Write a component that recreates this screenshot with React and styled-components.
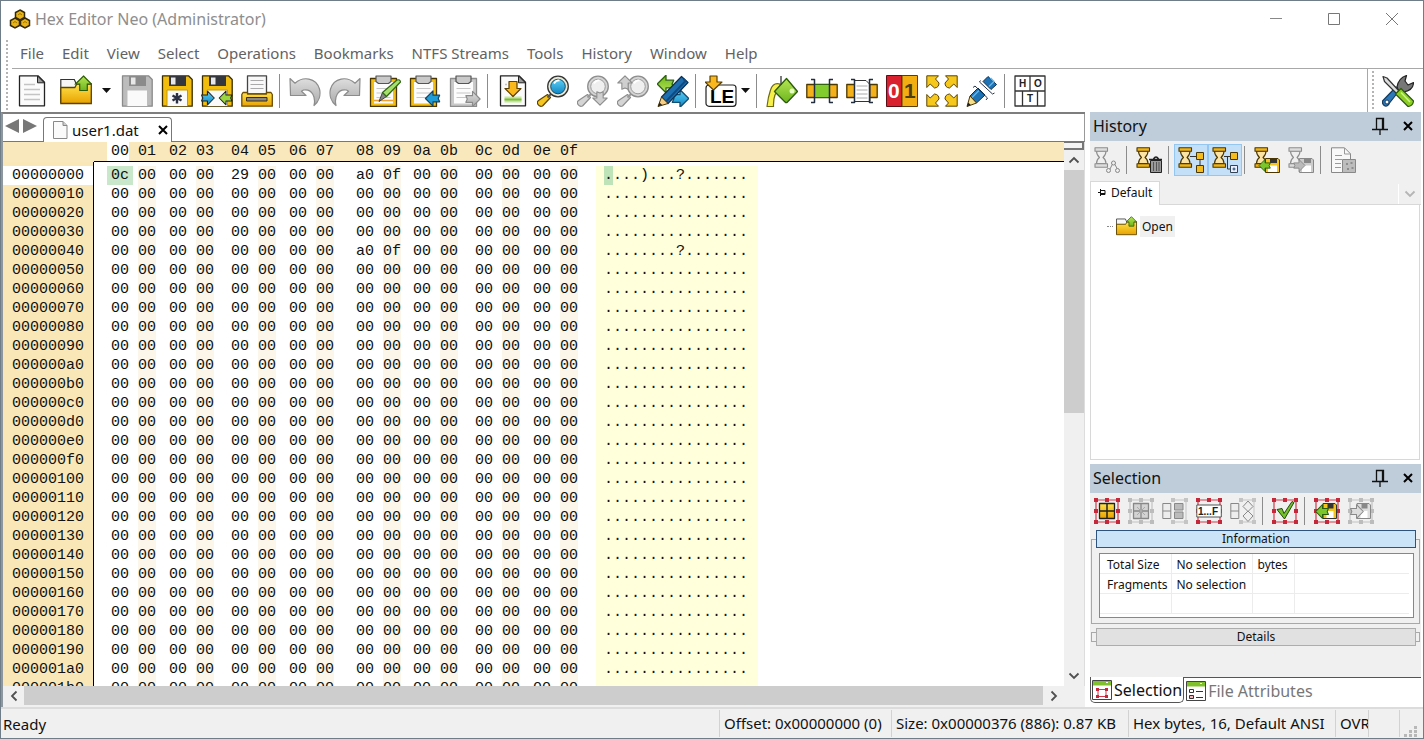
import React from 'react';
import styled, { createGlobalStyle, css } from 'styled-components';

const GlobalStyle = createGlobalStyle`
    * {
        box-sizing: border-box;
    }
    body {
        margin: 0;
        background: #fff;
        color: #111;
        font-family: "Noto Sans", "Open Sans", sans-serif;
        font-size: 15px;
    }
    button {
        margin: 0;
        padding: 0;
        border: 0;
        background: none;
        font: inherit;
        color: inherit;
    }
    svg {
        display: block;
        flex: none;
    }
`;

/* ---------- window frame ---------- */

const Window = styled.div`
    display: flex;
    flex-direction: column;
    height: 100vh;
    min-height: 480px;
    border: 1px solid #6f7d88;
    background: #fff;
    overflow: hidden;
`;

const TitleBar = styled.header`
    display: flex;
    align-items: center;
    height: 37px;
    padding: 0 2px 2px 8px;
    color: #8e8e8e;
    flex: none;

    h1 {
        flex: 1;
        margin: 0 0 0 4px;
        font-size: 16px;
        font-weight: 400;
    }
`;

const WindowButton = styled.button`
    display: flex;
    align-items: center;
    justify-content: center;
    width: 58px;
    height: 34px;
`;

const Bars = styled.div`
    display: flex;
    flex: none;
`;

const Grip = styled.div`
    width: 2px;
    margin: 2px 4px 2px ${({ $left }) => $left || 5}px;
    background: repeating-linear-gradient(#b4b4b4 0 2px, transparent 2px 4px);
`;

const BarStack = styled.div`
    flex: 1;
    min-width: 0;
`;

const MenuBar = styled.nav`
    display: flex;
    align-items: center;
    height: 31px;
    border-bottom: 1px solid #a8a8a8;

    button {
        height: 28px;
        padding: 0 9px;
        color: #626262;
        white-space: nowrap;
    }
    button:first-child {
        padding-left: 8px;
    }
`;

const ToolRow = styled.div`
    display: flex;
    align-items: center;
    height: 43px;
`;

const Tools = styled.div`
    display: flex;
    align-items: center;
    flex: 1;
`;

const ToolButton = styled.button`
    display: flex;
    align-items: center;
    justify-content: center;
    width: 40px;
    height: 40px;
    flex: none;
`;

const Split = styled.div`
    display: flex;
    margin-left: ${({ $room }) => ($room ? 4 : 0)}px;
    margin-right: ${({ $room }) => ($room ? 0 : 4)}px;
`;

const DropArrow = styled.button`
    display: flex;
    align-items: center;
    justify-content: center;
    width: ${({ $room }) => ($room ? 21 : 9)}px;
`;

const Separator = styled.span`
    width: 1px;
    height: ${({ $small }) => ($small ? 28 : 34)}px;
    margin: 0 5px 0 2px;
    background: #8c8c8c;
    flex: none;
`;

const Setup = styled.div`
    display: flex;
    align-items: center;
    align-self: stretch;
    border-left: 1px solid #a8a8a8;
    padding-right: 5px;

    > div {
        align-self: stretch;
    }
`;

const Main = styled.main`
    display: flex;
    flex: 1;
    min-height: 0;
`;

/* ---------- editor ---------- */

const Editor = styled.section`
    display: flex;
    flex-direction: column;
    flex: 1;
    min-width: 0;
    border-left: 2px solid #8d979d;
    border-top: 2px solid #7e7e7e;
`;

const TabStrip = styled.div`
    display: flex;
    height: 28px;
    flex: none;
    border-bottom: 1px solid #777;
    border-right: 1px solid #999;
`;

const TabNav = styled.button`
    display: flex;
    align-items: center;
    height: 24px;
    width: 18px;
    justify-content: center;
`;

const FileTab = styled.div`
    display: flex;
    align-items: center;
    height: 25px;
    margin: 3px 0 0 4px;
    padding: 0 3px 1px 9px;
    border: 1px solid #777;
    border-bottom: 0;
    border-radius: 4px 4px 0 0;
    background: #fff;

    span {
        margin: 0 19px 0 4px;
    }
`;

const Work = styled.div`
    display: flex;
    flex: 1;
    min-height: 0;
`;

const HexView = styled.div`
    flex: 1;
    min-width: 0;
    overflow: hidden;
`;

const HexTable = styled.table`
    width: 100%;
    table-layout: fixed;
    border-collapse: separate;
    border-spacing: 0;
    font: 15px/19px "Liberation Mono", monospace;
    color: #111;

    th,
    td {
        height: 19px;
        padding: 0;
        font-weight: 400;
        text-align: left;
        white-space: pre;
    }

    thead th {
        background: #fae8bd;
        border-bottom: 1px solid #000;
    }

    thead th:first-child {
        border-bottom: 0;
    }

    tbody tr:first-child > * {
        height: 4px;
    }
`;

const Offset = styled.th`
    && {
        padding-left: 9px;
        border-right: 1px solid #000;
        background: ${({ $active }) => ($active ? '#fff' : '#fae7b8')};
    }
`;

const Byte = styled.span`
    display: block;
    width: 18px;
    height: 19px;
    margin-left: auto;
    background: ${({ $odd }) => ($odd ? '#fcf5ea' : 'transparent')};
    ${({ $mark }) => $mark && css`
        background: ${$mark};
        box-shadow: -4px 0 0 ${$mark}, 4px 0 0 ${$mark};
    `}
`;

const Ascii = styled.td`
    background: #ffffdb;
    span {
        display: block;
        padding-left: 8px;
    }
    mark {
        display: inline-block;
        background: #bfe3b8;
        color: inherit;
    }
`;

const VScroll = styled.div`
    display: flex;
    flex-direction: column;
    width: 21px;
    flex: none;
    background: #f0f0f0;
    border-right: 1px solid #ddd;

    button {
        display: flex;
        align-items: center;
        justify-content: center;
        height: 20px;
    }
`;

const SplitBox = styled.div`
    height: 8px;
    border: 2px solid #777;
    border-left: 0;
    border-top-width: 1px;
    background: #f4f4f4;
`;

const VTrack = styled.div`
    flex: 1;
    div {
        height: 49%;
        background: #cdcdcd;
    }
`;

const HScroll = styled.div`
    display: flex;
    align-items: flex-start;
    height: 21px;
    padding-right: 21px;
    flex: none;
    background: #f0f0f0;

    button {
        display: flex;
        align-items: center;
        justify-content: center;
        width: 21px;
        height: 20px;
    }

    div {
        flex: 1;
        height: 19px;
        background: #cdcdcd;
    }
`;

/* ---------- side panels ---------- */

const Side = styled.aside`
    display: flex;
    flex-direction: column;
    width: 337px;
    flex: none;
    margin-left: 1px;
    padding: 0 2px 0 4px;
`;

const PanelTitle = styled.div`
    display: flex;
    align-items: center;
    height: 29px;
    padding: 0 8px 1px 3px;
    flex: none;
    background: #bfcddb;

    h2 {
        flex: 1;
        margin: 0;
        font-size: 16px;
        font-weight: 400;
    }
    button {
        display: flex;
        margin-left: 15px;
    }
`;

const PanelTools = styled.div`
    display: flex;
    align-items: center;
    height: 37px;
    flex: none;
    background: #f0f0f0;
`;

const SmallTool = styled.button`
    display: flex;
    align-items: center;
    justify-content: center;
    width: 34px;
    height: 32px;
    ${({ $on }) => $on && css`
        background: #c4dff8;
        border: 1px solid #93c6f2;
    `}
`;

const HistoryTabs = styled.div`
    display: flex;
    align-items: flex-end;
    justify-content: space-between;
    height: 27px;
    flex: none;
    background: #f0f0f0;
    box-shadow: inset 0 -1px 0 #d8d8d8;
    font-size: 12px;

    > button:first-child {
        display: flex;
        align-items: center;
        gap: 5px;
        height: 24px;
        padding: 0 7px 2px;
        border: 1px solid #d8d8d8;
        border-bottom: 0;
        background: #fff;
    }
    > button:last-child {
        display: flex;
        align-items: center;
        justify-content: center;
        width: 23px;
        height: 20px;
        margin-bottom: 1px;
        border-left: 1px solid #fff;
    }
`;

const Tree = styled.ul`
    flex: 1;
    margin: 0 1px 0 0;
    padding: 10px 0 0 16px;
    border: 1px solid #d8d8d8;
    border-top: 0;
    list-style: none;
    font-size: 12px;

    li {
        display: flex;
        align-items: center;
        height: 22px;
    }
    span {
        padding: 0 2px;
        margin-left: 3px;
        line-height: 21px;
        background: #f0f0f0;
    }
`;

const Dots = styled.i`
    width: 6px;
    margin-right: 3px;
    border-top: 1px dotted #888;
`;

const SelectionPanel = styled.section`
    margin-top: 4px;
    flex: none;
    background: #f0f0f0;
`;

const Group = styled.div`
    margin: ${({ $closed }) => ($closed ? '8px 1px 35px' : '9px 1px 0')};
    border: 1px solid #a8a8a8;
    padding-bottom: ${({ $closed }) => ($closed ? 0 : 5)}px;
`;

const GroupButton = styled.button`
    display: block;
    width: calc(100% - 7px);
    height: 18px;
    margin: ${({ $open }) => ($open ? '-10px 3px 5px 4px' : '-5px 3px -5px 4px')};
    border: 1px solid ${({ $open }) => ($open ? '#2b5580' : '#adadad')};
    background: ${({ $open }) => ($open ? '#cce4f7' : '#e1e1e1')};
    font-size: 12px;
    line-height: 16px;
`;

const InfoBox = styled.div`
    margin: 0 5px 0 7px;
    padding-bottom: 3px;
    border: 1px solid #828790;
    background: #fff;
`;

const InfoTable = styled.table`
    width: calc(100% - 4px);
    table-layout: fixed;
    border-collapse: collapse;
    font-size: 12px;
    line-height: 16px;

    td,
    th {
        height: 20px;
        padding: 3px 0 0 5px;
        border-right: 1px solid #ececec;
        border-bottom: 1px solid #ececec;
        font-weight: 400;
        text-align: left;
        white-space: nowrap;
    }
    th {
        padding-left: 7px;
    }
    td:last-child {
        border-right: 0;
    }
`;

const DockTabs = styled.div`
    display: flex;
    height: 30px;
    background: #fff;
    padding-bottom: 4px;

    &::after {
        content: "";
        flex: 1;
        border-top: 1px solid #555;
    }
`;

const DockTab = styled.button`
    display: flex;
    align-items: center;
    gap: 2px;
    padding: 0 2px;
    font-size: 16px;
    white-space: nowrap;
    color: #777;
    border-top: 1px solid #555;
    ${({ $active }) => $active && css`
        padding: 0 1px;
        color: #111;
        border: 1px solid #555;
        border-top: 0;
        border-radius: 0 0 5px 5px;
    `}
`;

const StatusBar = styled.footer`
    display: flex;
    align-items: center;
    height: 31px;
    flex: none;
    padding-left: 2px;
    border-top: 2px solid #dcdcdc;
    background: #f0f0f0;
    white-space: nowrap;
`;

const Pane = styled.span`
    width: ${({ $w }) => $w}px;
    height: 27px;
    line-height: 26px;
    padding-left: 4px;
    border-left: 1px solid #d2d2d2;
    overflow: hidden;
    flex: none;
`;

/* ---------- icons ---------- */

const Gradients = () => (
    <svg width="0" height="0" aria-hidden="true">
        <defs>
            <linearGradient id="gold" x2="0" y2="1">
                <stop offset="0" stopColor="#ffe24a" />
                <stop offset="1" stopColor="#e8a200" />
            </linearGradient>
            <linearGradient id="green" x2="0" y2="1">
                <stop offset="0" stopColor="#b5e655" />
                <stop offset="1" stopColor="#6db51c" />
            </linearGradient>
            <linearGradient id="blue" x2="0" y2="1">
                <stop offset="0" stopColor="#5fd0f5" />
                <stop offset="1" stopColor="#0d86c4" />
            </linearGradient>
            <linearGradient id="gray" x2="0" y2="1">
                <stop offset="0" stopColor="#dedede" />
                <stop offset="1" stopColor="#a9a9a9" />
            </linearGradient>
        </defs>
    </svg>
);

const Icon = ({ size = 32, children }) => (
    <svg width={size} height={size} viewBox={`0 0 ${size} ${size}`} fill="none" strokeLinejoin="round" aria-hidden="true">
        {children}
    </svg>
);

// block arrow pointing right, centred on its own origin
const Arrow = ({ x, y, turn = 0, scale = 1, fill, stroke = '#222' }) => (
    <path
        transform={`translate(${x} ${y}) rotate(${turn}) scale(${scale})`}
        d="M-7-3.5H0V-8L8 0 0 8V3.500H-7L-5.500 0z"
        fill={fill}
        stroke={stroke}
        strokeWidth="1.2"
    />
);

const Page = ({ lines = 'M8 9.500h11M8 14.500h16M8 19.500h16M8 24.500h16' }) => (
    <>
        <path d="M3.500.8H22l6.500 6.500v23.500h-25z" fill="#fbfbfb" stroke="#222" strokeWidth="1.300" />
        <path d="M21.500 1v6.800h6.800z" fill="#999" stroke="#222" />
        <path d={lines} stroke="#c4c4c4" strokeWidth="1.300" />
    </>
);

const NewIcon = () => <Icon><Page /></Icon>;

const Folder = () => (
    <>
        <path d="M.8 28V4.500h13.500l2 4.500H24v4H.8" fill="#f6f6f6" stroke="#333" strokeWidth="1.200" />
        <path d="M.8 28.500V12.500h14l2-3.500h14.500v19.500z" fill="url(#gold)" stroke="#5c4300" strokeWidth="1.300" />
        <path d="M23.500 1L31.500 9h-4.200v6.500h-7.600V9h-4.200z" fill="url(#green)" stroke="#2d5b0c" strokeWidth="1.200" />
    </>
);

const OpenIcon = ({ size = 32 }) => (
    <svg width={size} height={size} viewBox="0 0 32 32" fill="none" aria-hidden="true"><Folder /></svg>
);

const Floppy = ({ off }) => (
    <>
        <path d="M1.500.8h26l3.700 3.700v26.700H1.500z" fill={off ? '#bcbcbc' : '#f2bd0d'} stroke={off ? '#8a8a8a' : '#3a2c00'} strokeWidth="1.300" />
        <path d="M8 1h17v10H8z" fill={off ? '#8b8b8b' : '#34373d'} />
        <path d="M10 2.500h4.500v7H10z" fill="#e8e8e8" />
        <path d="M6 15h20.500v16H6z" fill="#fafafa" />
        <path d="M6 31V15h20.500v16" stroke={off ? '#bdbdbd' : '#c89a06'} />
    </>
);

const SaveIcon = () => <Icon><Floppy off /></Icon>;

const SaveAsIcon = () => (
    <Icon>
        <Floppy />
        <path d="M16 18v10.500M11.500 20.500l9 5M20.500 20.500l-9 5" stroke="#2b3042" strokeWidth="2.400" />
    </Icon>
);

const SaveSelIcon = () => (
    <Icon>
        <Floppy />
        <Arrow x={6.5} y={23} scale={0.85} fill="url(#blue)" />
        <Arrow x={25} y={23} turn={180} scale={0.85} fill="#9ad43f" />
    </Icon>
);

const PrintIcon = () => (
    <Icon>
        <path d="M6.500.8h19V19h-19z" fill="#f8f8f8" stroke="#444" strokeWidth="1.300" />
        <path d="M9.500 5.500h13M9.500 9.500h13M9.500 13.500h13" stroke="#aaa" />
        <path d="M2 17.500h4.500V19h19v-1.500H30l1.300 2v11.700H.8V19.500z" fill="url(#gold)" stroke="#6c4c00" strokeWidth="1.300" />
        <path d="M5.500 22.500h20.500v3.500H5.500z" fill="#888" stroke="#3b2b00" />
    </Icon>
);

const Curl = () => (
    <path d="M1 3.500l5 4.700C14 1 27 2.500 30.500 14c1.500 6-.5 12.500-5.500 16.500C27 22 23 13.500 14.500 15l-2 1.200 4.500 4.300H1.500z" fill="url(#gray)" stroke="#8c8c8c" strokeWidth="1.200" />
);

const UndoIcon = () => <Icon><Curl /></Icon>;
const RedoIcon = () => <Icon><g transform="matrix(-1 0 0 1 32 0)"><Curl /></g></Icon>;

const Clipboard = ({ off }) => (
    <>
        <path d="M1.500 3.500h26v28h-26z" fill={off ? '#c9c9c9' : '#f3bd12'} stroke={off ? '#8d8d8d' : '#4a3600'} strokeWidth="1.300" />
        <path d="M5 7h19v21.500H5z" fill="#fcfcfc" />
        <path d="M7.500 13.500h14M7.500 18h14M7.500 22.500h14" stroke="#c6c6c6" />
        <path d="M7 1h15v5.500l-2.500 2h-10L7 6.500z" fill="#c9c9c9" stroke="#555" strokeWidth="1.200" />
    </>
);

const ClipEditIcon = () => (
    <Icon>
        <Clipboard />
        <path d="M5 25.500h19" stroke="#f0a030" strokeWidth="1.500" />
        <path d="M10 26.500l3.500-9 4 4z" fill="#888" stroke="#444" />
        <path d="M13.500 17.500L28 5q3-1 3.500 2L17.500 21.500z" fill="#a6df6c" stroke="#33651a" strokeWidth="1.200" />
    </Icon>
);

const PasteIcon = () => <Icon><Clipboard /><Arrow x={24} y={23.5} turn={180} scale={0.95} fill="#1f9bd6" stroke="#14405c" /></Icon>;
const CopyIcon = () => <Icon><Clipboard off /><Arrow x={23.5} y={24} scale={0.95} fill="url(#gray)" stroke="#8a8a8a" /></Icon>;

const GotoIcon = () => (
    <Icon>
        <Page lines="M8 9.500h2" />
        <path d="M7.500 21.500h17v6h-17z" fill="#c6e69a" />
        <path d="M7.500 24.500h17" stroke="#7cbd3e" strokeWidth="2" />
        <path d="M12 6.500h8v7h4L16 21.500l-8-8h4z" fill="#fbb81c" stroke="#5b4000" strokeWidth="1.200" />
    </Icon>
);

const Lens = ({ off }) => (
    <>
        <path d="M10.500 19.500l3 3-8 8.500q-3 1-4.500-1.500t.5-4z" fill={off ? '#d5d5d5' : '#f5c520'} stroke={off ? '#8d8d8d' : '#5a4300'} strokeWidth="1.200" />
        <path d="M10.500 22.500l4-4" stroke={off ? '#999' : '#555'} strokeWidth="2" />
        <circle cx="21" cy="11.500" r="10.300" fill={off ? '#d4d4d4' : '#e9e9d7'} stroke={off ? '#8d8d8d' : '#333'} strokeWidth="1.300" />
        <circle cx="21" cy="11.500" r="7.300" fill={off ? '#efefef' : 'url(#blue)'} stroke={off ? '#9c9c9c' : '#1b4a66'} />
        <path d="M17 8.500q2-3.500 5.500-3" stroke="#fff" strokeWidth="1.800" />
    </>
);

const FindIcon = () => <Icon><Lens /></Icon>;
const FindNextIcon = () => <Icon><Lens off /><Arrow x={23} y={23} turn={90} scale={0.9} fill="#cfcfcf" stroke="#8d8d8d" /></Icon>;
const FindPrevIcon = () => <Icon><Lens off /><Arrow x={8} y={8} turn={-90} scale={0.9} fill="#cfcfcf" stroke="#8d8d8d" /></Icon>;

const ReplaceIcon = () => (
    <Icon>
        <Arrow x={9} y={9} turn={180} scale={1.1} fill="url(#green)" stroke="#2f6313" />
        <Arrow x={23} y={23.5} scale={1.1} fill="url(#blue)" stroke="#114e73" />
        <path d="M24.500 1.500l6.500 6-20 21-6.500-6.500z" fill="#1d6fb0" stroke="#0c2f50" strokeWidth="1.200" />
        <path d="M26.500 4l2 2L9 26.500" stroke="#114a80" strokeWidth="2" />
        <path d="M1 31.500l3.500-9.500 6.500 6.500z" fill="#f5cf87" stroke="#4a3300" />
        <path d="M1 31.500l1.500-4 2.700 2.500z" fill="#222" />
    </Icon>
);

const EndianIcon = () => (
    <Icon>
        <rect x="1" y="10" width="30" height="21.300" rx="3" fill="#fff" stroke="#222" strokeWidth="1.200" />
        <text x="5" y="28" fill="#000" fontFamily="Liberation Sans" fontWeight="700" fontSize="19">LE</text>
        <path d="M5 1h7v6h5l-8.500 8L0 7h5z" fill="#fbb81c" stroke="#5b4000" strokeWidth="1.200" />
    </Icon>
);

const FillIcon = () => (
    <Icon>
        <path d="M14 9q-7-2-9.500 6Q2 22 1 31.500h6.500Q7 18 14 14z" fill="#f7f04a" stroke="#6d6a10" strokeWidth="1.200" />
        <path d="M20.500 3.500L31.500 16.500 21 27.500q-1 .5-2-.5L8.500 16.500z" fill="url(#green)" stroke="#2b5b0c" strokeWidth="1.300" />
        <path d="M15 1v8.500" stroke="#333" strokeWidth="1.300" />
        <circle cx="26" cy="16" r="2.500" fill="#e6ffc2" />
    </Icon>
);

const Brackets = () => (
    <path d="M5 4.500h3.500v23H5M27 4.500h-3.500v23H27" stroke="#222d40" strokeWidth="1.500" />
);

const AllocIcon = () => (
    <Icon>
        <path d="M.8 9.500h30.400v13H.8z" fill="#f4b11a" stroke="#4d3800" strokeWidth="1.300" />
        <path d="M8.500 9.500h15v13h-15z" fill="#83cc2e" stroke="#31640d" />
        <Brackets />
    </Icon>
);

const InsertFileIcon = () => (
    <Icon>
        <path d="M.8 9.500h30.400v13H.8z" fill="#f4b11a" stroke="#4d3800" strokeWidth="1.300" />
        <path d="M8.500 5.500H20l4 4v17H8.500z" fill="#fff" stroke="#333" />
        <path d="M10.500 11h11M10.500 15h11M10.500 19h11M10.500 23h11" stroke="#aaa" />
        <Brackets />
    </Icon>
);

const BitsIcon = () => (
    <Icon>
        <path d="M.5.500H16v31H.5z" fill="#d9202e" stroke="#5a0d12" />
        <path d="M16 .5h15.500v31H16z" fill="#f3ae12" stroke="#5b3f00" />
        <text x="2" y="23" fill="#fff" fontFamily="Liberation Sans" fontWeight="700" fontSize="21">0</text>
        <text x="18" y="23" fill="#4c4010" fontFamily="Liberation Sans" fontWeight="700" fontSize="21">1</text>
    </Icon>
);

const Corner = ({ flip }) => (
    <path transform={flip} d="M.8.8h11.700l-3 3.200L13 8q0 4.500-4.500 5l-4.300-4-3.400 3.500z" fill="#f6c81c" stroke="#5b4300" />
);

const ExpandIcon = () => (
    <Icon>
        <Corner />
        <Corner flip="matrix(-1 0 0 1 32 0)" />
        <Corner flip="matrix(1 0 0 -1 0 32)" />
        <Corner flip="matrix(-1 0 0 -1 32 32)" />
    </Icon>
);

const ModifyIcon = () => (
    <Icon>
        <path d="M22 1.500l8.500 8-5.500 5-8-8z" fill="#1e73b6" stroke="#0c2f50" />
        <path d="M24.500 3l3.500 3.500-5 5" stroke="#66b6e8" strokeWidth="1.500" />
        <path d="M12 13l7 7-8.500 8L4 21z" fill="#1e73b6" stroke="#0c2f50" />
        <path d="M13 15.500L6 22.500" stroke="#66b6e8" strokeWidth="1.500" />
        <path d="M1 31.500L4 21l6.500 7z" fill="#f6e08c" stroke="#4a3300" />
        <path d="M1 31.500l1.300-4 2.500 2.500z" fill="#222" />
        <path d="M7 12.500l2-1.500 12.500 12-1.500 2M14.500 5.500l-1 1.500 13 12 2-1" stroke="#26344a" />
    </Icon>
);

const LayoutIcon = () => (
    <Icon>
        <path d="M1 1h30v30H1zM1 16h30M16 1v15M8.500 16v15M23.500 16v15" fill="#fff" stroke="#333" strokeWidth="1.300" />
        <g fill="#222" fontFamily="Liberation Sans" fontWeight="700" fontSize="10">
            <text x="5" y="12">H</text>
            <text x="20" y="12">O</text>
            <text x="13" y="27">T</text>
        </g>
    </Icon>
);

const SetupIcon = () => (
    <Icon>
        <path d="M18.500 14L7.500 28q-1.500 3.500-4.500 3-3-1.500-2.500-5l13.500-14z" fill="#2c78b8" stroke="#163a5c" strokeWidth="1.200" />
        <circle cx="5" cy="27" r="2" fill="#fff" stroke="#163a5c" />
        <path d="M15 12q1.500-9 9.500-11.500L23 6l3 4 5.500-2.500q0 8-10 9.500L18 19z" fill="#777" stroke="#222" strokeWidth="1.200" />
        <path d="M1 1.500l4 1.500 12 13-2.500 2.500L2.500 6.500z" fill="#ddd" stroke="#333" strokeWidth="1.200" />
        <path d="M13.500 19l5.500-5.500 12.500 12.500q-.5 5-5.500 5.500z" fill="#8ccf22" stroke="#2d5b0c" strokeWidth="1.200" />
        <path d="M19 17.500l9 9.500" stroke="#cdf58a" strokeWidth="1.500" />
    </Icon>
);

const AppIcon = () => (
    <svg width="22" height="20" viewBox="0 0 22 20" fill="#e9b417" stroke="#33290a" strokeWidth="1.500" aria-hidden="true">
        <path d="M11 1l4.500 2.500v5L11 11 6.500 8.500v-5z" />
        <path d="M6 9l4.500 2.500v5L6 19l-4.500-2.500v-5z" />
        <path d="M16 9l4.500 2.500v5L16 19l-4.500-2.500v-5z" />
        <path d="M9 6l2-1.500L13 6M4 14l2-1.500L8 14M14 14l2-1.500 2 1.500" stroke="#a07500" strokeWidth="1" />
    </svg>
);

const Caret = () => <svg width="9" height="5" aria-hidden="true"><path d="M0 0h9L4.500 5z" fill="#111" /></svg>;

const Chevron = ({ turn = 0, color = '#505050' }) => (
    <svg width="12" height="12" viewBox="0 0 12 12" aria-hidden="true">
        <path transform={`rotate(${turn} 6 6)`} d="M1.500 3.500L6 8l4.500-4.500" fill="none" stroke={color} strokeWidth="1.800" />
    </svg>
);

const Cross = ({ size = 10 }) => (
    <svg width={size} height={size} viewBox="0 0 10 10" aria-hidden="true">
        <path d="M1 1l8 8M9 1L1 9" stroke="#000" strokeWidth="2" />
    </svg>
);

const PinIcon = () => (
    <svg width="16" height="18" viewBox="0 0 16 18" fill="none" stroke="#111" aria-hidden="true">
        <path d="M4.500 12V1.500h7V12M10.500 2v10M0 12.500h16M8 12.500V18" strokeWidth="1.300" />
    </svg>
);

const TinyPin = () => (
    <svg width="8" height="8" viewBox="0 0 8 8" fill="none" stroke="#111" aria-hidden="true">
        <path d="M0 3.500h2.500M2.500 0v7M3 1.500h4v4H3M3 4.500h4" />
    </svg>
);

const BlankFile = () => (
    <svg width="15" height="18" viewBox="0 0 15 18" fill="#fafafa" stroke="#888" aria-hidden="true">
        <path d="M.5.500h9.500l4 4v13H.5z" />
        <path d="M10 .5v4h4" fill="#ccc" />
    </svg>
);

const Hourglass = ({ off }) => (
    <g stroke={off ? '#8d8d8d' : '#4a3600'} strokeWidth="1.100">
        <path d="M2.500 4q0 4 3 6.500-3 2-3 6H12q0-4-3-6 3-2.500 3-6.500z" fill={off ? '#efefef' : '#fbe3a6'} />
        <path d="M1 .8h12.500v3.400H1zM1 16.800h12.500v3.400H1z" fill={off ? '#ddd' : '#f0b41a'} />
    </g>
);

const HistoryTreeIcon = () => (
    <Icon size={26}>
        <Hourglass off />
        <path d="M19 16l-4 8M20 16l4 7" stroke="#888" />
        <g fill="#eee" stroke="#888">
            <circle cx="19.500" cy="16" r="2" /><circle cx="14.500" cy="23.500" r="2" /><circle cx="23.500" cy="23.500" r="2" />
        </g>
    </Icon>
);

const PurgeIcon = () => (
    <Icon size={26}>
        <Hourglass />
        <path d="M14.500 13.500h11V25.500h-11z" fill="#9a9a9a" stroke="#222" />
        <path d="M13 12.500h13.500M17.500 12q2.500-4 5 0" stroke="#222" strokeWidth="1.500" />
        <path d="M17.500 15v9M20.500 15v9M23 15v9" stroke="#555" />
    </Icon>
);

const BranchIcon = ({ plus }) => (
    <Icon size={26}>
        <Hourglass />
        <path d={plus ? 'M12 9.500h6M15.500 9.500V22H19' : 'M12 9.500h7M22 12v8'} stroke="#333" />
        <path d="M18.500 5.500h7v7h-7z" fill="#f4bd1d" stroke="#4a3600" />
        <path d="M18.500 18.500h7v7h-7z" fill={plus ? '#eef' : '#f4bd1d'} stroke={plus ? '#345' : '#4a3600'} />
        {plus && <path d="M22 20.500v3M20.500 22h3" stroke="#146" />}
    </Icon>
);

const HistorySaveIcon = ({ off }) => (
    <Icon size={26}>
        <Hourglass off={off} />
        <path d="M11.500 11.500H24l1.500 1.500v12.500h-14z" fill={off ? '#ccc' : '#f5c31c'} stroke={off ? '#888' : '#4a3600'} />
        <path d="M16 12h7v4h-7z" fill={off ? '#888' : '#333'} />
        <path d="M14 18.500h9v6.500h-9z" fill="#fff" />
        <Arrow x={11} y={18.500} turn={off ? 0 : 180} scale={0.75} fill={off ? '#bbb' : '#7cc62c'} stroke={off ? '#888' : '#285b0c'} />
    </Icon>
);

const HistoryPageIcon = () => (
    <Icon size={26}>
        <path d="M1.500.8h13l6 6v18.700h-19z" fill="#f8f8f8" stroke="#888" />
        <path d="M14.500 1v6h6M5 8.500h7M5 12.500h7M5 16.500h6M5 20.500h6" stroke="#999" />
        <path d="M12.500 12.500h13v13h-13z" fill="#bdbdbd" stroke="#888" />
        <path d="M16 16h2v2h-2zM20.500 15h2v2h-2zM17 21h2v2h-2zM21.500 20h2v2h-2z" fill="#8d8d8d" />
    </Icon>
);

const Frame = ({ off }) => {
    const spots = [[0, 0], [11, 0], [22, 0], [0, 11], [22, 11], [0, 22], [11, 22], [22, 22]];
    return (
        <g>
            <path d="M2 2h22v22H2z" stroke={off ? '#c2c2c2' : '#d3394a'} strokeWidth="1.200" />
            {spots.map(([x, y]) => (
                <rect key={`${x}-${y}`} x={x} y={y} width="4" height="4" fill={off ? '#bcbcbc' : '#c4283a'} />
            ))}
        </g>
    );
};

const SelAllIcon = () => (
    <Icon size={26}>
        <Frame />
        <path d="M5.500 5.500h15v15h-15z" fill="url(#gold)" stroke="#222" strokeWidth="1.300" />
        <path d="M13 5.500v15M5.500 13h15" stroke="#222" strokeWidth="1.500" />
    </Icon>
);

const SelNoneIcon = () => (
    <Icon size={26}>
        <Frame off />
        <path d="M5.500 5.500h15v15h-15zM13 5.500v15M5.500 13h15" fill="#d3d3d3" stroke="#888" strokeWidth="1.300" />
        <path d="M9 9l8 8M17 9l-8 8" stroke="#aaa" />
    </Icon>
);

const SelRangeIcon = ({ rhomb }) => (
    <Icon size={26}>
        <path d="M10 2h14v22H10" stroke="#c4c4c4" />
        <path d="M9 0h4v4H9zM22 0h4v4h-4zM9 22h4v4H9zM22 22h4v4h-4z" fill="#c4c4c4" />
        <path d="M.800 5.500h8v15h-8zM.800 13h8" fill="#ededed" stroke="#888" />
        {rhomb
            ? <path d="M18 3l5 5.500-5 5-5-5zM18 13l5 5-5 5.500-5-5.500z" fill="#eee" stroke="#888" />
            : <path d="M12.500 5.500h8.500v6.500h-8.500zM12.500 14h8.500v6.500h-8.500z" fill="#bbb" stroke="#888" />}
    </Icon>
);

const SelPatternIcon = () => (
    <Icon size={26}>
        <Frame />
        <path d="M.800 7h24.500v12H.800z" fill="#fff" stroke="#555" />
        <text x="2" y="16.500" fill="#222" fontFamily="Liberation Sans" fontWeight="700" fontSize="10">1...F</text>
    </Icon>
);

const SelCheckIcon = () => (
    <Icon size={26}>
        <Frame />
        <path d="M5 11.500l5-1 2 5L20 3.500l2 1L12.500 21z" fill="#74c12c" stroke="#23480c" />
    </Icon>
);

const SelSaveIcon = ({ off }) => (
    <Icon size={26}>
        <Frame off={off} />
        <path d="M9 5.500h12l1.500 1.500v13.500H9z" fill={off ? '#ddd' : '#f5c31c'} stroke={off ? '#888' : '#333'} />
        <path d="M13.500 6h6v4.500h-6z" fill={off ? '#888' : '#333'} />
        <path d="M12.500 13h7v7h-7z" fill="#fff" />
        <Arrow x={8.500} y={13.500} turn={off ? 0 : 180} scale={0.85} fill={off ? '#ddd' : '#7cc62c'} stroke={off ? '#888' : '#285b0c'} />
    </Icon>
);

const DockIcon = ({ list }) => (
    <svg width="20" height="20" viewBox="0 0 20 20" fill="none" aria-hidden="true">
        <path d="M.5.500h19v19H.5z" fill="#fff" stroke="#444" />
        <path d="M1 1h18v4.500H1z" fill="#80c02c" />
        <path d="M14 2.500h2" stroke="#fff" />
        {list ? (
            <>
                <path d="M3.500 8.500h4v3h-4z" stroke="#333" />
                <path d="M3.500 14.500h4v3h-4z" fill="#f4b8be" stroke="#333" />
                <path d="M10 10.500h7M10 16.500h7" stroke="#333" />
            </>
        ) : (
            <>
                <path d="M6 8.500v9M14 8.500v9M5 9.500h10M5 16.500h10" stroke="#d3394a" />
                <path d="M4 8h3v3H4zM13 8h3v3h-3zM4 15h3v3H4zM13 15h3v3h-3z" fill="#c4283a" />
            </>
        )}
    </svg>
);

/* ---------- data ---------- */

const menu = ['File', 'Edit', 'View', 'Select', 'Operations', 'Bookmarks', 'NTFS Streams', 'Tools', 'History', 'Window', 'Help'];

const toolbar = [
    ['New', NewIcon], ['Open', OpenIcon, 'room'], ['Save', SaveIcon], ['Save As', SaveAsIcon],
    ['Save Selection', SaveSelIcon], ['Print', PrintIcon], null,
    ['Undo', UndoIcon], ['Redo', RedoIcon], ['Edit Clipboard', ClipEditIcon], ['Paste', PasteIcon], ['Copy', CopyIcon], null,
    ['Go to', GotoIcon], ['Find', FindIcon], ['Find Next', FindNextIcon], ['Find Previous', FindPrevIcon], ['Replace', ReplaceIcon], null,
    ['Byte Order', EndianIcon, 'drop'], null,
    ['Fill', FillIcon], ['Allocate', AllocIcon], ['Insert File', InsertFileIcon], ['Bits', BitsIcon],
    ['Expand', ExpandIcon], ['Modify', ModifyIcon], null, ['Layout', LayoutIcon],
];

const gaps = [17, 9, 13, 9, 17, 9, 13, 9, 22, 9, 12, 9, 17, 9, 13, 9];

const hex = (n, width) => n.toString(16).padStart(width, '0');

// bytes that are not zero, by address
const bytes = { 0x00: 0x0c, 0x04: 0x29, 0x08: 0xa0, 0x09: 0x0f, 0x48: 0xa0, 0x49: 0x0f };

const toChar = (b) => {
    if (b > 0x7f) return '?';
    return b > 0x1f ? String.fromCharCode(b) : '.';
};

const rows = Array.from({ length: 28 }, (_, r) => (
    Array.from({ length: 16 }, (_, c) => bytes[r * 16 + c] || 0)
));

/* ---------- parts ---------- */

const HexDump = () => (
    <HexView>
        <HexTable>
            <colgroup>
                <col style={{ width: 91 }} />
                {gaps.map((gap, i) => <col key={i} style={{ width: gap + 18 }} />)}
                <col style={{ width: 18 }} />
                <col style={{ width: 162 }} />
                <col />
            </colgroup>
            <thead>
                <tr>
                    <th />
                    {gaps.map((_, i) => (
                        <th key={i}><Byte $mark={i === 0 && '#fff'}>{hex(i, 2)}</Byte></th>
                    ))}
                    <th /><th /><th />
                </tr>
            </thead>
            <tbody>
                <tr><Offset /><td colSpan={19} /></tr>
                {rows.map((row, r) => (
                    <tr key={r}>
                        <Offset $active={r === 0}>{hex(r * 16, 8)}</Offset>
                        {row.map((b, c) => (
                            <td key={c}>
                                <Byte $odd={c % 2 === 1} $mark={r + c === 0 && '#c9e7cb'}>{hex(b, 2)}</Byte>
                            </td>
                        ))}
                        <td />
                        <Ascii>
                            <span>
                                {r === 0 && <mark>.</mark>}
                                {row.slice(r === 0 ? 1 : 0).map(toChar).join('')}
                            </span>
                        </Ascii>
                        <td />
                    </tr>
                ))}
            </tbody>
        </HexTable>
    </HexView>
);

const PanelHead = ({ title }) => (
    <PanelTitle>
        <h2>{title}</h2>
        <button aria-label={`Pin ${title}`}><PinIcon /></button>
        <button aria-label={`Close ${title}`}><Cross /></button>
    </PanelTitle>
);

const App = () => (
    <>
        <GlobalStyle />
        <Window>
            <TitleBar>
                <AppIcon />
                <h1>Hex Editor Neo (Administrator)</h1>
                <WindowButton aria-label="Minimize">
                    <svg width="12" height="12"><path d="M0 5.500h12" stroke="#888" /></svg>
                </WindowButton>
                <WindowButton aria-label="Maximize">
                    <svg width="12" height="12"><path d="M.5.500h11v11H.5z" fill="none" stroke="#777" /></svg>
                </WindowButton>
                <WindowButton aria-label="Close">
                    <svg width="12" height="12"><path d="M0 0l12 12M12 0L0 12" stroke="#777" /></svg>
                </WindowButton>
            </TitleBar>

            <Bars>
                <Grip />
                <BarStack>
                    <MenuBar>
                        {menu.map((item) => <button key={item}>{item}</button>)}
                    </MenuBar>
                    <ToolRow>
                        <Tools>
                            {toolbar.map((tool, i) => {
                                if (!tool) return <Separator key={i} />;
                                const [name, Drawing, arrow] = tool;
                                const button = <ToolButton key={name} aria-label={name}><Drawing /></ToolButton>;
                                if (!arrow) return button;
                                return (
                                    <Split key={name} $room={arrow === 'room'}>
                                        {button}
                                        <DropArrow $room={arrow === 'room'} aria-label={`${name} options`}><Caret /></DropArrow>
                                    </Split>
                                );
                            })}
                        </Tools>
                        <Setup>
                            <Grip $left={4} />
                            <ToolButton aria-label="Settings"><SetupIcon /></ToolButton>
                        </Setup>
                    </ToolRow>
                </BarStack>
            </Bars>

            <Main>
                <Editor>
                    <TabStrip>
                        <TabNav aria-label="Previous tab"><svg width="14" height="14"><path d="M14 0v14L0 7z" fill="#777" /></svg></TabNav>
                        <TabNav aria-label="Next tab"><svg width="14" height="14"><path d="M0 0v14l14-7z" fill="#777" /></svg></TabNav>
                        <FileTab>
                            <BlankFile />
                            <span>user1.dat</span>
                            <button aria-label="Close user1.dat"><Cross /></button>
                        </FileTab>
                    </TabStrip>
                    <Work>
                        <HexDump />
                        <VScroll>
                            <SplitBox />
                            <button aria-label="Scroll up"><Chevron turn={180} /></button>
                            <VTrack><div /></VTrack>
                            <button aria-label="Scroll down"><Chevron /></button>
                        </VScroll>
                    </Work>
                    <HScroll>
                        <button aria-label="Scroll left"><Chevron turn={90} /></button>
                        <div />
                        <button aria-label="Scroll right"><Chevron turn={-90} /></button>
                    </HScroll>
                </Editor>

                <Side>
                    <PanelHead title="History" />
                    <PanelTools>
                        <SmallTool aria-label="History tree"><HistoryTreeIcon /></SmallTool>
                        <Separator $small />
                        <SmallTool aria-label="Purge history"><PurgeIcon /></SmallTool>
                        <Separator $small />
                        <SmallTool $on aria-label="Show branches"><BranchIcon /></SmallTool>
                        <SmallTool $on aria-label="Group branches"><BranchIcon plus /></SmallTool>
                        <Separator $small />
                        <SmallTool aria-label="Load history"><HistorySaveIcon /></SmallTool>
                        <SmallTool aria-label="Save history"><HistorySaveIcon off /></SmallTool>
                        <Separator $small />
                        <SmallTool aria-label="Create patch"><HistoryPageIcon /></SmallTool>
                    </PanelTools>
                    <HistoryTabs>
                        <button><TinyPin />Default</button>
                        <button aria-label="More branches"><Chevron color="#b5b5b5" /></button>
                    </HistoryTabs>
                    <Tree>
                        <li><Dots /><OpenIcon size={21} /><span>Open</span></li>
                    </Tree>

                    <SelectionPanel>
                        <PanelHead title="Selection" />
                        <PanelTools>
                            <SmallTool aria-label="Select all"><SelAllIcon /></SmallTool>
                            <SmallTool aria-label="Select none"><SelNoneIcon /></SmallTool>
                            <SmallTool aria-label="Select range"><SelRangeIcon /></SmallTool>
                            <SmallTool aria-label="Select pattern"><SelPatternIcon /></SmallTool>
                            <SmallTool aria-label="Transform selection"><SelRangeIcon rhomb /></SmallTool>
                            <Separator $small />
                            <SmallTool aria-label="Apply selection"><SelCheckIcon /></SmallTool>
                            <Separator $small />
                            <SmallTool aria-label="Load selection"><SelSaveIcon /></SmallTool>
                            <SmallTool aria-label="Save selection"><SelSaveIcon off /></SmallTool>
                        </PanelTools>
                        <Group>
                            <GroupButton $open>Information</GroupButton>
                            <InfoBox>
                                <InfoTable>
                                    <colgroup>
                                        <col style={{ width: 71 }} />
                                        <col style={{ width: 81 }} />
                                        <col style={{ width: 42 }} />
                                        <col />
                                    </colgroup>
                                    <tbody>
                                        <tr><th>Total Size</th><td>No selection</td><td>bytes</td><td /></tr>
                                        <tr><th>Fragments</th><td>No selection</td><td /><td /></tr>
                                        <tr><th /><td /><td /><td /></tr>
                                    </tbody>
                                </InfoTable>
                            </InfoBox>
                        </Group>
                        <Group $closed>
                            <GroupButton>Details</GroupButton>
                        </Group>
                        <DockTabs>
                            <DockTab $active><DockIcon />Selection</DockTab>
                            <DockTab><DockIcon list />File Attributes</DockTab>
                        </DockTabs>
                    </SelectionPanel>
                </Side>
            </Main>

            <StatusBar>
                <div style={{ flex: 1 }}>Ready</div>
                <Pane $w={172}>Offset: 0x00000000 (0)</Pane>
                <Pane $w={237}>Size: 0x00000376 (886): 0.87 KB</Pane>
                <Pane $w={207}>Hex bytes, 16, Default ANSI</Pane>
                <Pane $w={33}>OVR</Pane>
                <Pane $w={31} />
                <Pane $w={24}>
                    <svg width="14" height="27"><path d="M10 16h3v3h-3zM5 20h3v3H5zM10 20h3v3h-3zM0 24h3v3H0zM5 24h3v3H5zM10 24h3v3h-3z" fill="#b8b8b8" /></svg>
                </Pane>
            </StatusBar>
            <Gradients />
        </Window>
    </>
);

export default App;
